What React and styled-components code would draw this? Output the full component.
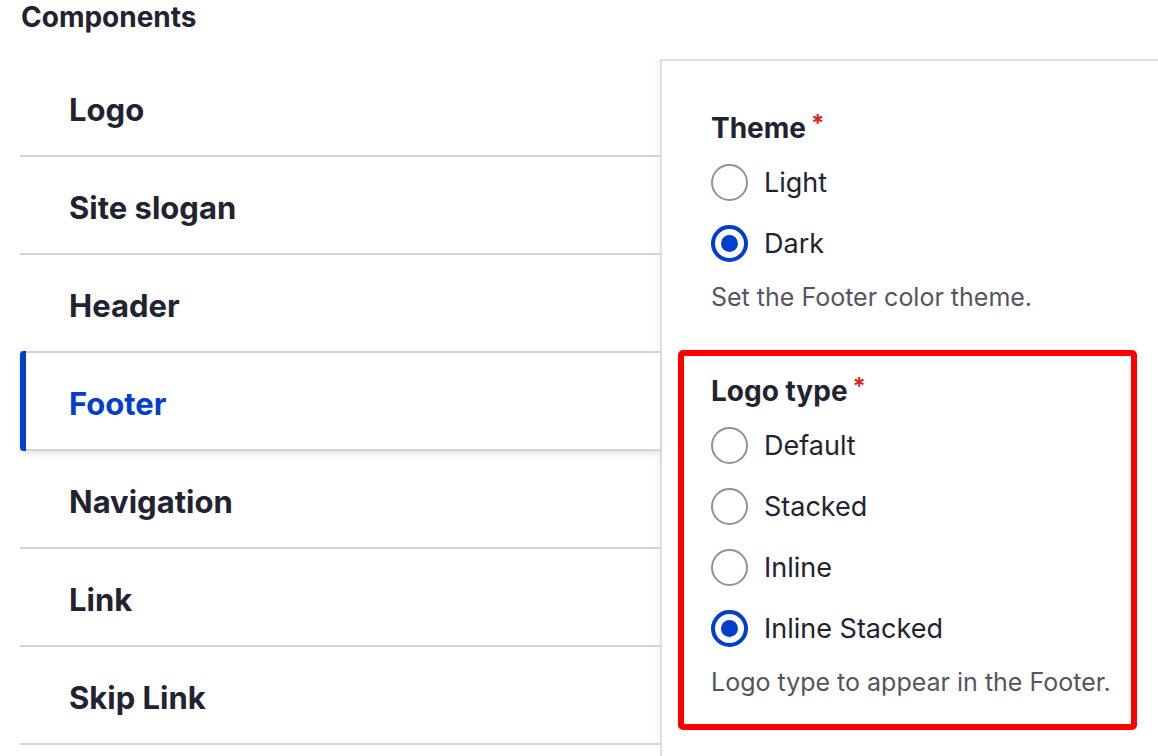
import styled, { createGlobalStyle } from 'styled-components';

const GlobalStyle = createGlobalStyle`
  body {
    margin: 0;
    background: #fff;
    font-family: Inter, "Noto Sans", "Liberation Sans", sans-serif;
    color: #222330;
  }
`;

const tabs = ['Logo', 'Site slogan', 'Header', 'Footer', 'Navigation', 'Link', 'Skip Link'];

const groups = [
    {
        label: 'Theme',
        options: ['Light', 'Dark'],
        checked: 'Dark',
        description: 'Set the Footer color theme.',
    },
    {
        label: 'Logo type',
        options: ['Default', 'Stacked', 'Inline', 'Inline Stacked'],
        checked: 'Inline Stacked',
        description: 'Logo type to appear in the Footer.',
        highlight: true,
    },
];

const App = () => {
    return (
        <Page>
            <GlobalStyle />
            <Heading>Components</Heading>
            <Columns>
                <TabList>
                    {tabs.map((t) => (
                        <Tab key={t} $active={t === 'Footer'}>{t}</Tab>
                    ))}
                </TabList>
                <Panel>
                    {groups.map((g) => (
                        <FormItem key={g.label} $highlight={g.highlight}>
                            <Label>
                                {g.label}
                                <Required>*</Required>
                            </Label>
                            {g.options.map((o) => (
                                <RadioRow key={o}>
                                    <Radio $checked={o === g.checked} />
                                    <RadioText>{o}</RadioText>
                                </RadioRow>
                            ))}
                            <Description>{g.description}</Description>
                        </FormItem>
                    ))}
                </Panel>
            </Columns>
        </Page>
    );
};

export default App;

const Page = styled.div`
  padding-left: 20px;
  height: 756px;
  overflow: hidden;
`;

const Heading = styled.h2`
  margin: 0 0 24px 1px;
  font-size: 28px;
  line-height: 35px;
  font-weight: 700;
  color: #222330;
`;

const Columns = styled.div`
  display: flex;
  align-items: flex-start;
`;

const TabList = styled.div`
  width: 640px;
  flex: none;
  display: flex;
  flex-direction: column;
  box-shadow: inset -10px 0 10px -10px rgba(0, 0, 0, 0.08);
`;

const Tab = styled.div`
  position: relative;
  height: 98px;
  padding: 4px 0 0 49px;
  box-sizing: border-box;
  display: flex;
  align-items: center;
  border-bottom: 2px solid #d3d4d9;
  font-size: 31px;
  font-weight: 700;
  color: ${(p) => (p.$active ? '#003ecc' : '#222330')};
  background: ${(p) => (p.$active ? '#fff' : 'transparent')};
  box-shadow: ${(p) => (p.$active ? '0 3px 6px rgba(0, 0, 0, 0.1)' : 'none')};
  z-index: ${(p) => (p.$active ? 1 : 0)};

  &::before {
    content: '';
    display: ${(p) => (p.$active ? 'block' : 'none')};
    position: absolute;
    left: 0;
    top: -2px;
    bottom: -2px;
    width: 6px;
    background: #003ecc;
    border-radius: 4px 0 0 4px;
  }
`;

const Panel = styled.div`
  flex: 1;
  min-height: 720px;
  border-top: 2px solid #dedfe4;
  border-left: 2px solid #dedfe4;
  padding: 45px 21px 0 16px;
`;

const FormItem = styled.div`
  border: ${(p) => (p.$highlight ? '6px solid #ff0000' : '0')};
  border-radius: ${(p) => (p.$highlight ? '5px' : '0')};
  padding: ${(p) => (p.$highlight ? '13px 0 27px 27px' : '0 0 0 33px')};
  margin-top: ${(p) => (p.$highlight ? '38px' : '0')};
`;

const Label = styled.div`
  font-size: 28px;
  line-height: 36px;
  font-weight: 700;
  color: #222330;
  margin-bottom: 6px;
`;

const Required = styled.span`
  color: #d72222;
  font-size: 24px;
  margin-left: 5px;
  vertical-align: 6px;
`;

const RadioRow = styled.div`
  display: flex;
  align-items: center;
  gap: 16px;
  height: 61px;
`;

const Radio = styled.span`
  width: 37px;
  height: 37px;
  box-sizing: border-box;
  border-radius: 50%;
  border: ${(p) => (p.$checked ? '4px solid #003ecc' : '2.5px solid #8e929c')};
  display: flex;
  align-items: center;
  justify-content: center;
  flex: none;

  &::after {
    content: '';
    display: ${(p) => (p.$checked ? 'block' : 'none')};
    width: 17px;
    height: 17px;
    border-radius: 50%;
    background: #003ecc;
  }
`;

const RadioText = styled.span`
  font-size: 27px;
  color: #222330;
`;

const Description = styled.div`
  margin-top: 8px;
  font-size: 25px;
  line-height: 30px;
  color: #545560;
`;
